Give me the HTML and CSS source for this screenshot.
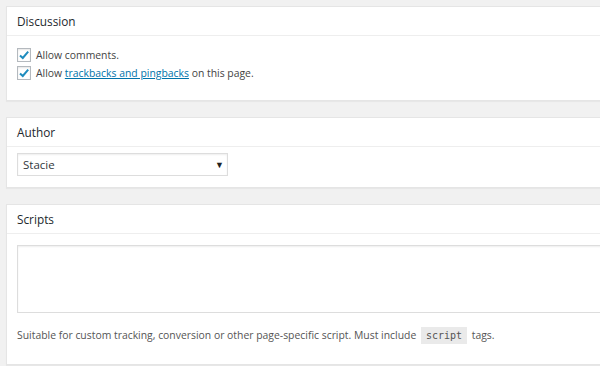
FILE: index.html
```html
<!DOCTYPE html>
<html lang="en">
<head>
<meta charset="UTF-8">
<title>Page options</title>
<link rel="stylesheet" href="styles.css">
</head>
<body>
<div class="boxes">

  <div class="postbox">
    <h2 class="hndle">Discussion</h2>
    <div class="inside discussion">
      <label class="opt">
        <span class="check"><svg width="12" height="12" viewBox="0 0 12 12"><path d="M2 6.4 L4.8 9 L10.2 2.6" fill="none" stroke="#1e8cbe" stroke-width="2"/></svg></span>
        Allow comments.
      </label>
      <label class="opt">
        <span class="check"><svg width="12" height="12" viewBox="0 0 12 12"><path d="M2 6.4 L4.8 9 L10.2 2.6" fill="none" stroke="#1e8cbe" stroke-width="2"/></svg></span>
        <span>Allow <a href="#">trackbacks and pingbacks</a> on this page.</span>
      </label>
    </div>
  </div>

  <div class="postbox">
    <h2 class="hndle">Author</h2>
    <div class="inside author">
      <div class="select-wrap">
        <select class="author-select">
          <option>Stacie</option>
        </select>
        <span class="arrow">&#9660;</span>
      </div>
    </div>
  </div>

  <div class="postbox">
    <h2 class="hndle">Scripts</h2>
    <div class="inside scripts">
      <textarea class="script-box"></textarea>
      <p class="howto">Suitable for custom tracking, conversion or other page-specific script. Must include <code>script</code> tags.</p>
    </div>
  </div>

</div>
</body>
</html>
```

FILE: styles.css
```css
body { margin: 0; background: #f1f1f1; font-family: "Open Sans", sans-serif; font-size: 10.4px; color: #444; }
.boxes { padding: 6px 0 0 6px; margin-right: -30px; }
.postbox { background: #fff; border: 1px solid #e5e5e5; box-shadow: 0 1px 1px rgba(0,0,0,0.04); margin-bottom: 16px; }
.hndle { margin: 0; height: 28px; line-height: 28px; padding: 0 10px; font-size: 11.8px; font-weight: 400; color: #23282d; border-bottom: 1px solid #eee; }

.inside { padding: 0 10px; }
.discussion { padding-top: 12px; padding-bottom: 20px; display: flex; flex-direction: column; gap: 4px; }
.opt { display: flex; align-items: center; gap: 5px; height: 14px; }
.check { width: 12px; height: 12px; border: 1px solid #b4b9be; box-shadow: inset 0 1px 2px rgba(0,0,0,0.1); display: flex; align-items: center; justify-content: center; }
a { color: #0073aa; }

.author { padding-top: 6px; padding-bottom: 11px; }
.select-wrap { position: relative; width: 211px; }
.author-select { appearance: none; -webkit-appearance: none; width: 100%; height: 23px; border: 1px solid #ddd; background: #fff; box-shadow: inset 0 1px 2px rgba(0,0,0,0.07); font-family: "Open Sans", sans-serif; font-size: 11.5px; color: #32373c; padding: 0 5px; margin: 0; }
.arrow { position: absolute; right: 4px; top: 5px; font-size: 9px; color: #222; pointer-events: none; }

.scripts { padding-top: 11px; padding-bottom: 1px; }
.script-box { display: block; width: 100%; box-sizing: border-box; height: 68px; border: 1px solid #ddd; box-shadow: inset 0 1px 2px rgba(0,0,0,0.07); margin: 0; resize: none; }
.howto { margin: 14px 0 19px; line-height: 16px; color: #555; }
code { font-family: "DejaVu Sans Mono", monospace; font-size: 10px; background: #eaeaea; padding: 3px 5px; margin: 0 2px; }
```
